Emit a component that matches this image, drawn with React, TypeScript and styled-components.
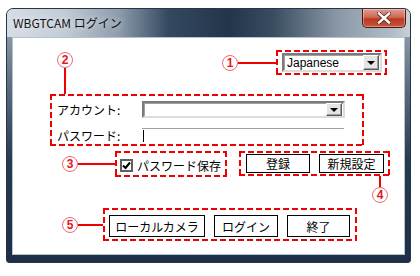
import React from "react";
import styled, { createGlobalStyle } from "styled-components";

const GlobalStyle = createGlobalStyle`
  html, body { margin: 0; padding: 0; background: #ffffff; }
  body { font-family: "Noto Sans CJK JP", "Liberation Sans", sans-serif; }
  * { box-sizing: border-box; }
`;

const RED = "#f00000";

const Page = styled.div`
  width: 420px;
  height: 276px;
  padding: 8px 0 0 6px;
`;

const Window = styled.div`
  width: 405px;
  height: 255px;
  display: flex;
  flex-direction: column;
  border: 1px solid #25364a;
  border-radius: 7px 7px 3px 3px;
  overflow: hidden;
  background: linear-gradient(180deg, #a3aeb9 0%, #5d6e80 30%, #263a52 60%, #1c2f47 100%);
`;

const TitleBar = styled.div`
  height: 28px;
  flex: none;
  display: flex;
  align-items: flex-start;
  justify-content: space-between;
  padding: 0 4px 0 6px;
  background: linear-gradient(90deg, #d6dde4 0%, #c2ccd6 14%, #8c9bab 28%, #34485f 40%, #22354b 55%, #3a4c60 66%, #8a98a6 82%, #b3bdc7 96%, #c9d0d8 100%);
`;

const Title = styled.div`
  margin-top: 6px;
  font: 12px "Noto Sans CJK JP", sans-serif;
  line-height: 16px;
  color: #111;
  text-shadow: 0 0 6px rgba(255, 255, 255, 0.9);
`;

const CloseButton = styled.div`
  width: 44px;
  height: 19px;
  display: flex;
  align-items: center;
  justify-content: center;
  border: 1px solid #4a1a12;
  border-top: none;
  border-radius: 0 0 5px 5px;
  background: linear-gradient(180deg, #e49a8a 0%, #d06a55 45%, #b93a22 55%, #c8553c 100%);
  box-shadow: inset 0 0 0 1px rgba(255, 255, 255, 0.35);
`;

const Body = styled.div`
  flex: 1;
  display: flex;
  padding: 0 5px 7px 5px;
`;

const Client = styled.div`
  flex: 1;
  background: #ffffff;
  border: 1px solid #b4c1ce;
  display: flex;
  flex-direction: column;
  font: 12px "Noto Sans CJK JP", sans-serif;
  color: #000;
`;

const Num = styled.div`
  width: 16px;
  height: 16px;
  flex: none;
  border-radius: 50%;
  border: 1px solid #f26a6a;
  color: #e8141e;
  font: bold 12px "Liberation Sans", sans-serif;
  line-height: 14px;
  text-align: center;
  background: #fff;
`;

const HLine = styled.div<{ $w: number }>`
  width: ${(p) => p.$w}px;
  height: 2px;
  flex: none;
  background: ${RED};
`;

const VLine = styled.div<{ $h: number }>`
  width: 2px;
  height: ${(p) => p.$h}px;
  flex: none;
  background: ${RED};
`;

const Dashed = styled.div`
  flex: none;
  background:
    repeating-linear-gradient(90deg, ${RED} 0 6px, transparent 6px 9px) left top / 100% 2px no-repeat,
    repeating-linear-gradient(90deg, ${RED} 0 6px, transparent 6px 9px) left bottom / 100% 2px no-repeat,
    repeating-linear-gradient(180deg, ${RED} 0 6px, transparent 6px 9px) left top / 2px 100% no-repeat,
    repeating-linear-gradient(180deg, ${RED} 0 6px, transparent 6px 9px) right top / 2px 100% no-repeat;
`;

const TopSection = styled.div`
  display: flex;
  justify-content: space-between;
  align-items: flex-start;
  padding: 12px 17px 0 44px;
`;

const AnnoColumn = styled.div`
  display: flex;
  flex-direction: column;
  align-items: center;
  margin-top: 2px;
`;

const AnnoRow = styled.div`
  display: flex;
  align-items: center;
`;

const LangBox = styled(Dashed)`
  width: 111px;
  height: 25px;
  padding: 3px 5px 3px 6px;
`;

const Combo = styled.div<{ $w: number; $h: number }>`
  width: ${(p) => p.$w}px;
  height: ${(p) => p.$h}px;
  display: flex;
  align-items: center;
  justify-content: space-between;
  background: #fff;
  border: 2px solid;
  border-color: #7a7a7a #dcdcdc #dcdcdc #7a7a7a;
  box-shadow: inset 1px 1px 0 #a0a0a0;
  padding: 0 1px 0 3px;
  font: 12px "Liberation Sans", sans-serif;
`;

const DropBtn = styled.div<{ $h: number }>`
  width: 16px;
  height: ${(p) => p.$h}px;
  display: flex;
  align-items: center;
  justify-content: center;
  background: #e4e4e4;
  border: 1px solid;
  border-color: #ffffff #5a5a5a #5a5a5a #ffffff;
  box-shadow: inset -1px -1px 0 #a0a0a0;
`;

const Arrow = styled.div`
  width: 0;
  height: 0;
  border-left: 4px solid transparent;
  border-right: 4px solid transparent;
  border-top: 4px solid #000;
`;

const GroupBox = styled(Dashed)`
  margin-left: 37px;
  width: 314px;
  height: 52px;
  padding: 7px 17px 0 7px;
  display: flex;
  flex-direction: column;
  gap: 10px;
`;

const FieldRow = styled.div`
  display: grid;
  grid-template-columns: 85px 1fr;
  align-items: center;
`;

const Label = styled.div`
  line-height: 15px;
  white-space: nowrap;
`;

const PasswordField = styled.div`
  height: 15px;
  width: 202px;
  border-top: 1px solid #a0a0a0;
  padding: 1px 0 0 1px;
`;

const Caret = styled.div`
  width: 1px;
  height: 12px;
  background: #000;
`;

const MidSection = styled.div`
  display: flex;
  align-items: flex-start;
  margin-top: 5px;
  padding-left: 49px;
`;

const SaveBox = styled(Dashed)`
  width: 112px;
  height: 26px;
  display: flex;
  align-items: center;
  gap: 4px;
  padding: 3px 0 0 5px;
  white-space: nowrap;
`;

const CheckBox = styled.div`
  width: 13px;
  height: 13px;
  border: 2px solid #5f5f5f;
  background: #fff;
  display: flex;
  align-items: center;
  justify-content: center;
`;

const RightColumn = styled.div`
  display: flex;
  flex-direction: column;
  align-items: flex-end;
  margin-left: 12px;
`;

const RegisterBox = styled(Dashed)`
  width: 151px;
  height: 25px;
  display: flex;
  gap: 9px;
  padding: 3px 0 0 7px;
`;

const Button = styled.div<{ $w: number; $h: number }>`
  width: ${(p) => p.$w}px;
  height: ${(p) => p.$h}px;
  border: 1px solid #000;
  background: #fff;
  display: flex;
  align-items: center;
  justify-content: center;
  white-space: nowrap;
`;

const Anno4 = styled.div`
  display: flex;
  flex-direction: column;
  align-items: center;
  margin-right: 2px;
`;

const BottomSection = styled.div`
  display: flex;
  align-items: center;
  margin-top: 5px;
  padding-left: 49px;
`;

const ActionBox = styled(Dashed)`
  width: 254px;
  height: 33px;
  display: flex;
  gap: 9px;
  padding: 7px 0 0 6px;
`;

export default function App() {
  return (
    <>
      <GlobalStyle />
      <Page>
        <Window>
          <TitleBar>
            <Title>WBGTCAM ログイン</Title>
            <CloseButton>
              <svg width="14" height="12" viewBox="0 0 14 12">
                <path d="M2 1.5 L12 10.5 M12 1.5 L2 10.5" stroke="#5a2a22" strokeWidth="4" strokeLinecap="square" />
                <path d="M2 1.5 L12 10.5 M12 1.5 L2 10.5" stroke="#ffffff" strokeWidth="2.4" strokeLinecap="square" />
              </svg>
            </CloseButton>
          </TitleBar>
          <Body>
            <Client>
              <TopSection>
                <AnnoColumn>
                  <Num>2</Num>
                  <VLine $h={26} />
                </AnnoColumn>
                <AnnoRow>
                  <Num>1</Num>
                  <HLine $w={38} />
                  <LangBox>
                    <Combo $w={100} $h={19}>
                      <span>Japanese</span>
                      <DropBtn $h={15}>
                        <Arrow />
                      </DropBtn>
                    </Combo>
                  </LangBox>
                </AnnoRow>
              </TopSection>

              <GroupBox>
                <FieldRow>
                  <Label>アカウント:</Label>
                  <Combo $w={203} $h={17}>
                    <span />
                    <DropBtn $h={13}>
                      <Arrow />
                    </DropBtn>
                  </Combo>
                </FieldRow>
                <FieldRow>
                  <Label>パスワード:</Label>
                  <PasswordField>
                    <Caret />
                  </PasswordField>
                </FieldRow>
              </GroupBox>

              <MidSection>
                <AnnoRow>
                  <Num>3</Num>
                  <HLine $w={37} />
                  <SaveBox>
                    <CheckBox>
                      <svg width="9" height="9" viewBox="0 0 9 9">
                        <path d="M1 4.5 L3.5 7 L8 1.5" fill="none" stroke="#000" strokeWidth="2" />
                      </svg>
                    </CheckBox>
                    <span>パスワード保存</span>
                  </SaveBox>
                </AnnoRow>
                <RightColumn>
                  <RegisterBox>
                    <Button $w={64} $h={19}>登録</Button>
                    <Button $w={65} $h={19}>新規設定</Button>
                  </RegisterBox>
                  <Anno4>
                    <VLine $h={11} />
                    <Num>4</Num>
                  </Anno4>
                </RightColumn>
              </MidSection>

              <BottomSection>
                <Num>5</Num>
                <HLine $w={25} />
                <ActionBox>
                  <Button $w={96} $h={22}>ローカルカメラ</Button>
                  <Button $w={64} $h={22}>ログイン</Button>
                  <Button $w={63} $h={22}>終了</Button>
                </ActionBox>
              </BottomSection>
            </Client>
          </Body>
        </Window>
      </Page>
    </>
  );
}
